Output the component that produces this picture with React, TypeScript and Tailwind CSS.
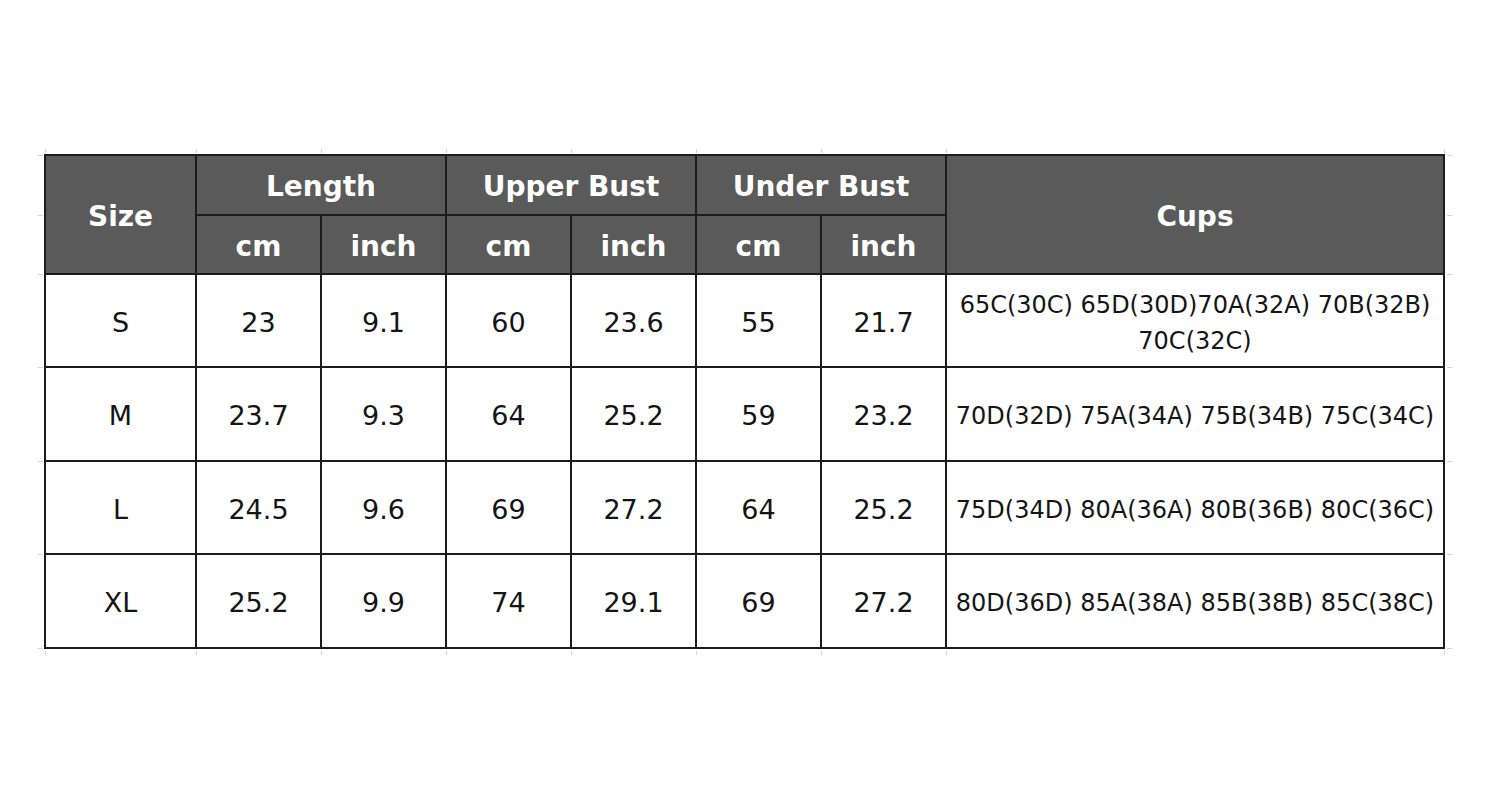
import React from "react";

const rows = [
  { size: "S", v: ["23", "9.1", "60", "23.6", "55", "21.7"], cups: ["65C(30C) 65D(30D)70A(32A) 70B(32B)", "70C(32C)"] },
  { size: "M", v: ["23.7", "9.3", "64", "25.2", "59", "23.2"], cups: ["70D(32D) 75A(34A) 75B(34B) 75C(34C)"] },
  { size: "L", v: ["24.5", "9.6", "69", "27.2", "64", "25.2"], cups: ["75D(34D) 80A(36A) 80B(36B) 80C(36C)"] },
  { size: "XL", v: ["25.2", "9.9", "74", "29.1", "69", "27.2"], cups: ["80D(36D) 85A(38A) 85B(38B) 85C(38C)"] },
];

const head = "bg-[#5a5a5a] text-white font-bold text-[28px] flex items-center justify-center pt-[4px]";
const cell = "bg-white text-[#151515] text-[27px] flex items-center justify-center pt-[5px]";

const colX = [45, 196, 321, 446, 571, 696, 821, 946, 1444];
const rowY = [155, 215, 274, 367, 461, 554, 648];

export default function App() {
  return (
    <div className="w-[1500px] h-[800px] bg-white relative" style={{ fontFamily: '"DejaVu Sans", Verdana, sans-serif' }}>
      {colX.map((x) => (
        <React.Fragment key={x}>
          <div className="absolute w-[1px] h-[4px] bg-[#d4d4d4] top-[149px]" style={{ left: x }} />
          <div className="absolute w-[1px] h-[4px] bg-[#d4d4d4] top-[651px]" style={{ left: x }} />
        </React.Fragment>
      ))}
      {rowY.map((y) => (
        <React.Fragment key={y}>
          <div className="absolute h-[1px] w-[5px] bg-[#d4d4d4] left-[38px]" style={{ top: y }} />
          <div className="absolute h-[1px] w-[5px] bg-[#d4d4d4] left-[1447px]" style={{ top: y }} />
        </React.Fragment>
      ))}
      <div className="absolute left-[44px] top-[154px] bg-[#1c1c1c] p-[2px] grid gap-[2px] grid-cols-[149px_123px_123px_123px_123px_123px_123px_496px] grid-rows-[58px_57px_91px_92px_91px_92px]">
        <div className={`${head} row-span-2`}>Size</div>
        <div className={`${head} col-span-2`}>Length</div>
        <div className={`${head} col-span-2`}>Upper Bust</div>
        <div className={`${head} col-span-2`}>Under Bust</div>
        <div className={`${head} row-span-2`}>Cups</div>
        <div className={head}>cm</div>
        <div className={head}>inch</div>
        <div className={head}>cm</div>
        <div className={head}>inch</div>
        <div className={head}>cm</div>
        <div className={head}>inch</div>
        {rows.map((r) => (
          <React.Fragment key={r.size}>
            <div className={cell}>{r.size}</div>
            {r.v.map((x, i) => (
              <div key={i} className={cell}>{x}</div>
            ))}
            <div className="bg-white text-[#151515] text-[24px] leading-[36px] pt-[4px] flex flex-col items-center justify-center text-center whitespace-nowrap">
              {r.cups.map((c, i) => (
                <span key={i}>{c}</span>
              ))}
            </div>
          </React.Fragment>
        ))}
      </div>
    </div>
  );
}
